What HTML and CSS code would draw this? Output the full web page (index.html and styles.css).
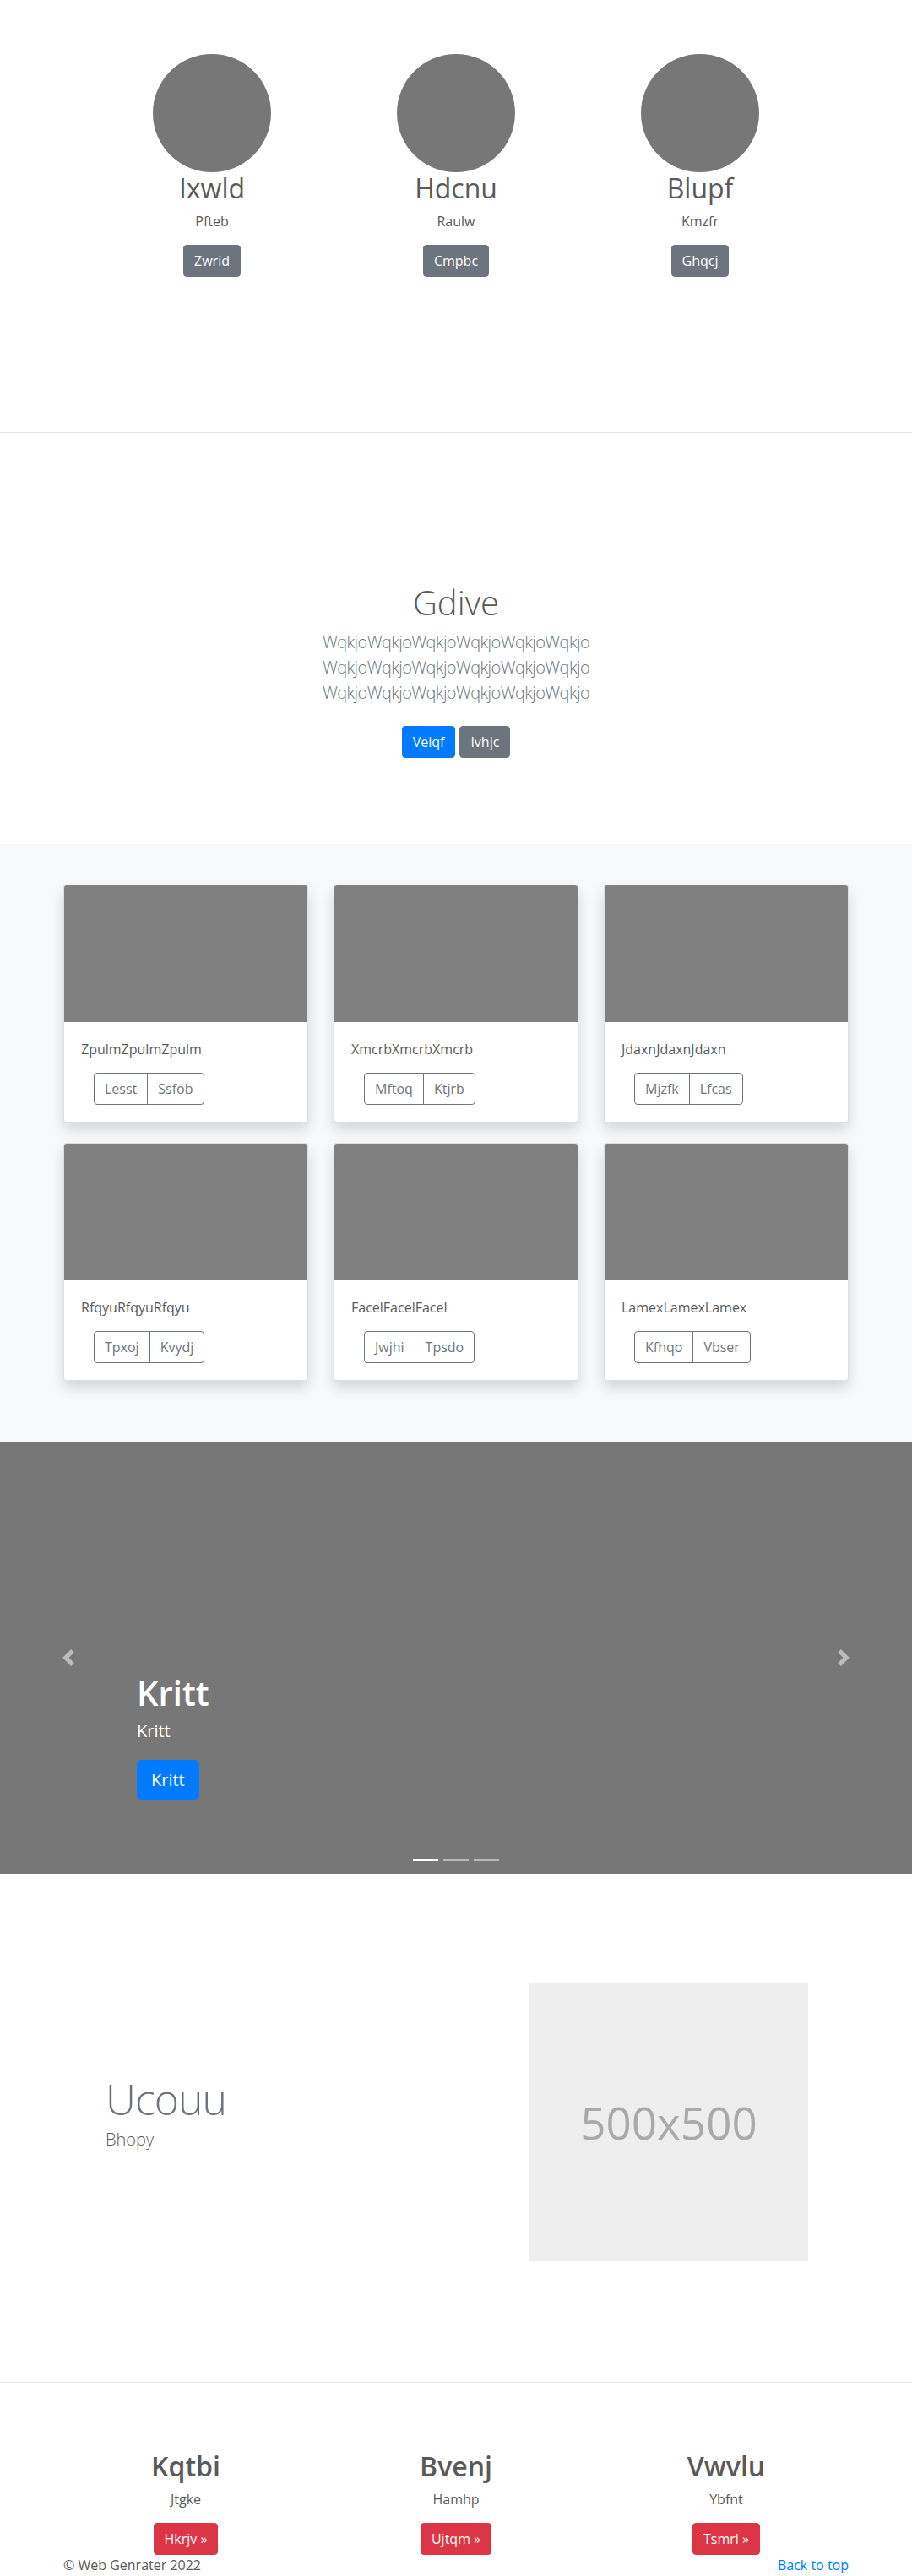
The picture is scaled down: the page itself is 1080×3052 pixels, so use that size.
FILE: index.html
```html
<!DOCTYPE html>
<html lang="en">
<head>
<meta charset="utf-8">
<title>Web Genrater</title>
<link rel="stylesheet" href="styles.css">
</head>
<body>
<section class="marketing">
  <div class="marketing-row">
    <div class="feature">
      <div class="circle"></div>
      <h2 class="feature-title">Ixwld</h2>
      <p class="feature-text">Pfteb</p>
      <a class="btn btn-secondary" href="#">Zwrid</a>
    </div>
    <div class="feature">
      <div class="circle"></div>
      <h2 class="feature-title">Hdcnu</h2>
      <p class="feature-text">Raulw</p>
      <a class="btn btn-secondary" href="#">Cmpbc</a>
    </div>
    <div class="feature">
      <div class="circle"></div>
      <h2 class="feature-title">Blupf</h2>
      <p class="feature-text">Kmzfr</p>
      <a class="btn btn-secondary" href="#">Ghqcj</a>
    </div>
  </div>
</section>

<section class="hero">
  <h1 class="hero-title">Gdive</h1>
  <p class="hero-lead">WqkjoWqkjoWqkjoWqkjoWqkjoWqkjo<br>WqkjoWqkjoWqkjoWqkjoWqkjoWqkjo<br>WqkjoWqkjoWqkjoWqkjoWqkjoWqkjo</p>
  <div class="hero-actions">
    <a class="btn btn-primary" href="#">Veiqf</a>
    <a class="btn btn-secondary" href="#">Ivhjc</a>
  </div>
</section>

<section class="album">
  <div class="album-grid">
    <div class="card">
      <div class="card-img"></div>
      <div class="card-body">
        <p class="card-text">ZpulmZpulmZpulm</p>
        <div class="btn-group"><a class="btn btn-outline" href="#">Lesst</a><a class="btn btn-outline" href="#">Ssfob</a></div>
      </div>
    </div>
    <div class="card">
      <div class="card-img"></div>
      <div class="card-body">
        <p class="card-text">XmcrbXmcrbXmcrb</p>
        <div class="btn-group"><a class="btn btn-outline" href="#">Mftoq</a><a class="btn btn-outline" href="#">Ktjrb</a></div>
      </div>
    </div>
    <div class="card">
      <div class="card-img"></div>
      <div class="card-body">
        <p class="card-text">JdaxnJdaxnJdaxn</p>
        <div class="btn-group"><a class="btn btn-outline" href="#">Mjzfk</a><a class="btn btn-outline" href="#">Lfcas</a></div>
      </div>
    </div>
    <div class="card">
      <div class="card-img"></div>
      <div class="card-body">
        <p class="card-text">RfqyuRfqyuRfqyu</p>
        <div class="btn-group"><a class="btn btn-outline" href="#">Tpxoj</a><a class="btn btn-outline" href="#">Kvydj</a></div>
      </div>
    </div>
    <div class="card">
      <div class="card-img"></div>
      <div class="card-body">
        <p class="card-text">FacelFacelFacel</p>
        <div class="btn-group"><a class="btn btn-outline" href="#">Jwjhi</a><a class="btn btn-outline" href="#">Tpsdo</a></div>
      </div>
    </div>
    <div class="card">
      <div class="card-img"></div>
      <div class="card-body">
        <p class="card-text">LamexLamexLamex</p>
        <div class="btn-group"><a class="btn btn-outline" href="#">Kfhqo</a><a class="btn btn-outline" href="#">Vbser</a></div>
      </div>
    </div>
  </div>
</section>

<section class="carousel">
  <a class="carousel-control control-prev" href="#">
    <svg class="control-icon" viewBox="0 0 8 8" width="20" height="20"><path d="M5.25 0l-4 4 4 4 1.5-1.5L4.25 4l2.5-2.5L5.25 0z" fill="#fff"/></svg>
  </a>
  <div class="carousel-caption">
    <h1 class="caption-title">Kritt</h1>
    <p class="caption-text">Kritt</p>
    <a class="btn btn-primary btn-lg" href="#">Kritt</a>
  </div>
  <a class="carousel-control control-next" href="#">
    <svg class="control-icon" viewBox="0 0 8 8" width="20" height="20"><path d="M2.75 0l-1.5 1.5L3.75 4l-2.5 2.5L2.75 8l4-4-4-4z" fill="#fff"/></svg>
  </a>
  <ol class="carousel-indicators">
    <li class="indicator active"></li>
    <li class="indicator"></li>
    <li class="indicator"></li>
  </ol>
</section>

<section class="featurette">
  <div class="featurette-row">
    <div class="featurette-text">
      <h2 class="featurette-heading">Ucouu</h2>
      <p class="featurette-lead">Bhopy</p>
    </div>
    <div class="placeholder"><span class="placeholder-text">500x500</span></div>
  </div>
</section>

<section class="bottom">
  <div class="bottom-row">
    <div class="bottom-col">
      <h2 class="bottom-title">Kqtbi</h2>
      <p class="bottom-text">Jtgke</p>
      <a class="btn btn-danger" href="#">Hkrjv »</a>
    </div>
    <div class="bottom-col">
      <h2 class="bottom-title">Bvenj</h2>
      <p class="bottom-text">Hamhp</p>
      <a class="btn btn-danger" href="#">Ujtqm »</a>
    </div>
    <div class="bottom-col">
      <h2 class="bottom-title">Vwvlu</h2>
      <p class="bottom-text">Ybfnt</p>
      <a class="btn btn-danger" href="#">Tsmrl »</a>
    </div>
  </div>
  <footer class="site-footer">
    <p class="copyright">© Web Genrater 2022</p>
    <a class="back-top" href="#">Back to top</a>
  </footer>
</section>
</body>
</html>
```

FILE: styles.css
```css
* {
  box-sizing: border-box;
}

body {
  margin: 0;
  font-family: "Open Sans", "Segoe UI", "Liberation Sans", sans-serif;
  font-size: 16px;
  line-height: 1.5;
  color: #5a5a5a;
  background: #fff;
}

h1, h2, p {
  margin: 0;
}

/* Buttons */
.btn {
  display: inline-block;
  font-size: 16px;
  line-height: 24px;
  font-weight: 400;
  padding: 6px 12px;
  border: 1px solid transparent;
  border-radius: 4px;
  text-decoration: none;
  text-align: center;
  white-space: nowrap;
}

.btn-secondary {
  background: #6c757d;
  border-color: #6c757d;
  color: #fff;
}

.btn-primary {
  background: #007bff;
  border-color: #007bff;
  color: #fff;
}

.btn-danger {
  background: #dc3545;
  border-color: #dc3545;
  color: #fff;
}

.btn-outline {
  background: transparent;
  border-color: #6c757d;
  color: #6c757d;
}

.btn-lg {
  font-size: 20px;
  line-height: 30px;
  padding: 8px 16px;
  border-radius: 6px;
}

/* Marketing */
.marketing {
  padding: 64px 0 184px;
  border-bottom: 1px solid #e2e2e2;
}

.marketing-row {
  display: grid;
  grid-template-columns: repeat(3, 289px);
  justify-content: center;
  text-align: center;
}

.circle {
  width: 140px;
  height: 140px;
  border-radius: 50%;
  background: #777;
  margin: 0 auto;
}

.feature-title {
  font-size: 32px;
  font-weight: 400;
  line-height: 38px;
  margin-bottom: 8px;
}

.feature-text {
  margin-bottom: 16px;
}

/* Hero */
.hero {
  padding: 177px 0 94px;
  text-align: center;
}

.hero-title {
  font-size: 40px;
  font-weight: 300;
  line-height: 48px;
  margin-bottom: 8px;
}

.hero-lead {
  font-size: 20px;
  font-weight: 300;
  line-height: 30px;
  letter-spacing: -0.6px;
  color: #6c757d;
  margin-bottom: 16px;
}

.hero-actions {
  display: flex;
  justify-content: center;
  gap: 5px;
  padding: 8px 0;
}

/* Album */
.album {
  background: #f8f9fa;
  padding: 48px 0 72px;
}

.album-grid {
  width: 930px;
  margin: 0 auto;
  display: grid;
  grid-template-columns: repeat(3, 290px);
  column-gap: 30px;
  row-gap: 24px;
}

.card {
  background: #fff;
  border: 1px solid rgba(0, 0, 0, 0.125);
  border-radius: 4px;
  overflow: hidden;
  box-shadow: 0 8px 16px rgba(0, 0, 0, 0.15);
}

.card-img {
  height: 162px;
  background: #808080;
}

.card-body {
  padding: 20px;
}

.card-text {
  margin-bottom: 16px;
  color: #5a5a5a;
}

.btn-group {
  display: flex;
  margin-left: 15px;
}

.btn-group .btn:first-child {
  border-top-right-radius: 0;
  border-bottom-right-radius: 0;
}

.btn-group .btn + .btn {
  margin-left: -1px;
  border-top-left-radius: 0;
  border-bottom-left-radius: 0;
}

/* Carousel */
.carousel {
  position: relative;
  height: 512px;
  background: #777;
  overflow: hidden;
}

.carousel-control {
  position: absolute;
  top: 0;
  bottom: 0;
  width: 15%;
  display: flex;
  align-items: center;
  justify-content: center;
  opacity: 0.5;
}

.control-prev {
  left: 0;
}

.control-next {
  right: 0;
}

.control-icon {
  display: block;
  width: 20px;
  height: 20px;
}

.carousel-caption {
  position: absolute;
  left: 15%;
  right: 15%;
  bottom: 87px;
  color: #fff;
  text-align: left;
}

.caption-title {
  font-size: 40px;
  font-weight: 600;
  line-height: 48px;
  margin-bottom: 6px;
}

.caption-text {
  font-size: 20px;
  line-height: 30px;
  margin-bottom: 19px;
}

.carousel-indicators {
  position: absolute;
  left: 0;
  right: 0;
  bottom: 15px;
  display: flex;
  justify-content: center;
  margin: 0;
  padding: 0;
  list-style: none;
}

.indicator {
  width: 30px;
  height: 3px;
  margin: 0 3px;
  background: rgba(255, 255, 255, 0.5);
}

.indicator.active {
  background: #fff;
}

/* Featurette */
.featurette {
  padding: 129px 0 143px;
  border-bottom: 1px solid #e2e2e2;
}

.featurette-row {
  width: 960px;
  margin: 0 auto;
  display: flex;
  align-items: center;
}

.featurette-text {
  flex: 0 0 567px;
  padding-left: 65px;
}

.featurette-heading {
  font-size: 50px;
  font-weight: 300;
  line-height: 1;
  letter-spacing: -1px;
  color: #6c757d;
  margin-bottom: 8px;
}

.featurette-lead {
  font-size: 20px;
  font-weight: 300;
  line-height: 30px;
  margin-bottom: 16px;
}

.placeholder {
  flex: 0 0 330px;
  height: 330px;
  background: #eee;
  display: flex;
  align-items: center;
  justify-content: center;
}

.placeholder-text {
  font-size: 53px;
  color: #aaa;
  line-height: 1;
}

/* Bottom */
.bottom {
  padding-top: 80px;
}

.bottom-row {
  width: 960px;
  margin: 0 auto;
  display: grid;
  grid-template-columns: repeat(3, 1fr);
  text-align: center;
}

.bottom-title {
  font-size: 32px;
  font-weight: 600;
  line-height: 38px;
  margin-bottom: 8px;
}

.bottom-text {
  margin-bottom: 16px;
}

.site-footer {
  width: 960px;
  margin: 0 auto;
  padding: 0 15px;
  display: flex;
  justify-content: space-between;
  line-height: 24px;
}

.back-top {
  color: #007bff;
  text-decoration: none;
}
```
